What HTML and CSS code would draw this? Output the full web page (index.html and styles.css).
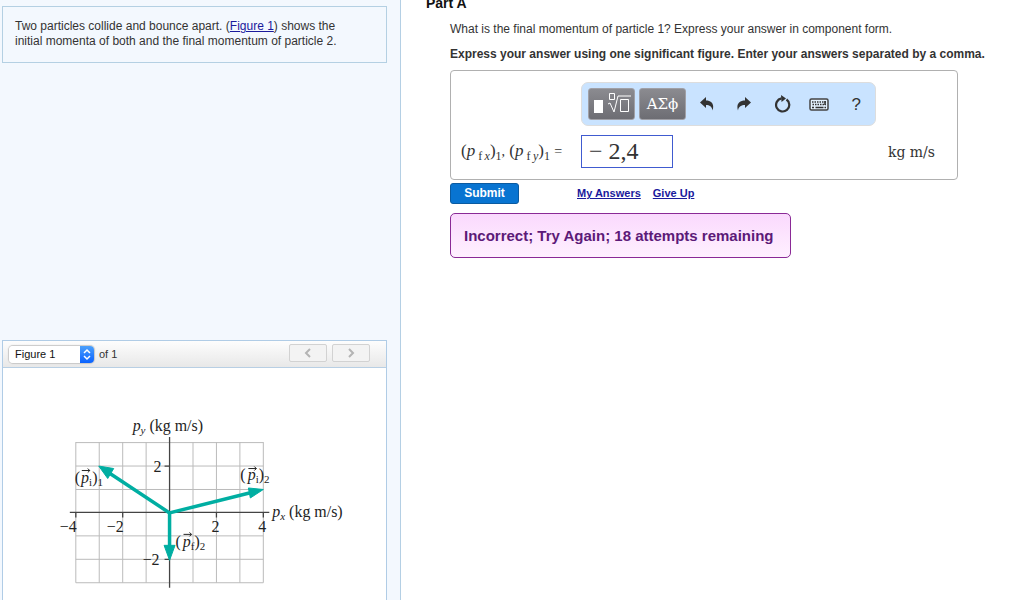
FILE: index.html
```html
<!DOCTYPE html>
<html lang="en">
<head>
<meta charset="utf-8">
<title>Momentum problem</title>
<link rel="stylesheet" href="styles.css">
</head>
<body>
<div class="page">
  <aside class="side">
    <p class="intro">Two particles collide and bounce apart. (<a href="#figure">Figure 1</a>) shows the initial momenta of both and the final momentum of particle 2.</p>
    <section class="figure" id="figure">
      <div class="figure-bar">
        <div class="picker">
          <select class="picker-select" id="fig"><option>Figure 1</option></select>
          <svg class="picker-arrows" width="14" height="17" viewBox="0 0 14 17"><path d="M4 7l3-3 3 3M4 10l3 3 3-3"/></svg>
        </div>
        <label class="figure-count" for="fig">of 1</label>
        <button class="nav" type="button" aria-label="Previous figure" disabled><svg width="8" height="10" viewBox="0 0 8 10"><path d="M6 1L2 5l4 4"/></svg></button>
        <button class="nav" type="button" aria-label="Next figure" disabled><svg width="8" height="10" viewBox="0 0 8 10"><path d="M2 1l4 4-4 4"/></svg></button>
      </div>
      <svg class="graph" width="384" height="232" viewBox="3 368 384 232">
        <path class="grid" d="M76 442.500H264M76 466H264M76 489.500H264M76 536H264M76 559.500H264M76 583H264M76 442V583M99.500 442V583M123 442V583M146.500 442V583M193.500 442V583M217 442V583M240.500 442V583M264 442V583"/>
        <path class="axis" d="M70 512.500H270M170 437V588M76 512.500v5M123 512.500v5M217 512.500v5M264 512.500v5M165 466h5M165 559.500h5"/>
        <g class="vector">
          <path d="M170 513L108 472M170 513L252 492.500M170 513V548"/>
          <path class="head" d="M99 466l15 2.500-6 10zM264 489.500l-15-1.500 2 10zM170 560.500l-5.500-15h11z"/>
        </g>
        <text x="133" y="431"><tspan class="it">p</tspan><tspan class="it sub" dy="3">y</tspan><tspan dy="-3"> (kg m/s)</tspan></text>
        <text x="273" y="517"><tspan class="it">p</tspan><tspan class="it sub" dy="3">x</tspan><tspan dy="-3"> (kg m/s)</tspan></text>
        <text x="154" y="472">2</text>
        <text x="143" y="565">−2</text>
        <text x="60" y="532">−4</text>
        <text x="107" y="532">−2</text>
        <text x="212" y="532">2</text>
        <text x="259" y="532">4</text>
        <text x="75" y="483">(<tspan class="it" dx="1">p</tspan><tspan class="sub" dy="3">i</tspan><tspan dy="-3">)</tspan><tspan class="sub" dy="3">1</tspan></text>
        <text x="241" y="480">(<tspan class="it" dx="2">p</tspan><tspan class="sub" dy="3">i</tspan><tspan dy="-3">)</tspan><tspan class="sub" dy="3">2</tspan></text>
        <text x="176" y="547">(<tspan class="it" dx="2">p</tspan><tspan class="sub" dy="3">f</tspan><tspan dy="-3">)</tspan><tspan class="sub" dy="3">2</tspan></text>
        <path class="over" d="M82 470.500h8m-2-2l2 2-2 2M249 468.500h8m-2-2l2 2-2 2M184 534.500h8m-2-2l2 2-2 2"/>
      </svg>
    </section>
  </aside>
  <main class="main">
    <h2 class="part">Part A</h2>
    <div class="content">
      <p class="question">What is the final momentum of particle 1? Express your answer in component form.</p>
      <p class="instruction">Express your answer using one significant figure. Enter your answers separated by a comma.</p>
      <form class="form">
        <div class="answer">
          <div class="toolbar">
            <button class="tool" type="button" aria-label="Templates"><svg width="38" height="24" viewBox="0 0 38 24"><path fill="#fff" d="M1 8h9v13H1z"/><path class="tool-line" d="M16.500 1.500h5v6h-5zM15 12l2-1 4 9 4-16h13M27.500 7.500h8v12h-8z"/></svg></button>
            <button class="tool tool-greek" type="button">ΑΣϕ</button>
            <button class="icon" type="button" aria-label="Undo"><svg width="14" height="14" viewBox="0 0 14 14"><path fill="#333" d="M0 5.500L6 0v3.500c6 0 8.500 4 6.500 10C12 9.500 9.500 8 6 8v3z"/></svg></button>
            <button class="icon" type="button" aria-label="Redo"><svg width="14" height="14" viewBox="0 0 14 14"><path fill="#333" d="M14 5.500L8 0v3.500c-6 0-9 4-7 10C1.500 9.500 4.500 8 8 8v3z"/></svg></button>
            <button class="icon" type="button" aria-label="Reset"><svg width="18" height="18" viewBox="0 0 18 18"><path fill="none" stroke="#333" stroke-width="2.200" d="M13.500 4.500A6.600 6.600 0 1 1 8.500 3.400"/><path fill="#333" d="M8 0l5 3.500-4.500 3.500z"/></svg></button>
            <button class="icon" type="button" aria-label="Keyboard"><svg width="20" height="14" viewBox="0 0 20 14"><rect x="1" y="2" width="18" height="11" rx="1.500" fill="#e4f1fd" stroke="#444" stroke-width="1.500"/><path fill="none" stroke="#333" stroke-width="1.500" stroke-dasharray="1.500 1" d="M3 5h14M3.500 7.500h13.500"/><path stroke="#333" stroke-width="1.500" d="M3 10.500h2m1.500 0h8m1 0h1.500M16 4v4"/></svg></button>
            <button class="icon help" type="button" aria-label="Help">?</button>
          </div>
          <label class="math" for="answer">(<i>p</i><sub>&nbsp;f&thinsp;<i>x</i></sub>)<sub>1</sub><span class="comma">,</span> (<i>p</i><sub>&nbsp;f&thinsp;<i>y</i></sub>)<sub>1</sub> <span class="equals">=</span></label>
          <input class="value" id="answer" type="text" value="− 2,4">
          <span class="unit">kg m/s</span>
        </div>
        <div class="actions">
          <button class="submit" type="button">Submit</button>
          <a href="#answers">My Answers</a>
          <a href="#giveup">Give Up</a>
        </div>
      </form>
      <p class="feedback">Incorrect; Try Again; 18 attempts remaining</p>
    </div>
  </main>
</div>
</body>
</html>
```
FILE: styles.css
```css
* { box-sizing: border-box; }
body {
  margin: 0;
  background: #fff;
  color: #333;
  font: 12px/15px "Liberation Sans", Arial, sans-serif;
}
p, h2 { margin: 0; }
a { color: #1a1a9c; }
button, input, select { font: inherit; color: inherit; margin: 0; padding: 0; }

.page { display: flex; min-height: 100vh; overflow: hidden; }

.side {
  display: flex;
  flex-direction: column;
  justify-content: space-between;
  flex: 0 0 401px;
  padding: 6px 13px 0 2px;
  background: #f3f8fe;
  border-right: 1px solid #b4cfe4;
}
.intro { padding: 12px 36px 13px 12px; border: 1px solid #b4d0e3; }
.figure { background: #fff; border: 1px solid #b0cce6; border-bottom: 0; }
.figure-bar {
  display: flex;
  align-items: center;
  gap: 5px;
  height: 27px;
  padding: 0 16px 0 6px;
  border-bottom: 1px solid #b8cfe4;
  background: linear-gradient(#fdfdfd, #e8e8e8);
  font-size: 11px;
}
.picker { display: flex; border-radius: 4px; overflow: hidden; box-shadow: 0 0 1px 1px #c8c8c8; }
.picker-select {
  appearance: none;
  width: 71px;
  height: 17px;
  padding-left: 6px;
  border: 0;
  border-radius: 0;
  background: #fff;
  color: #111;
}
.picker-arrows {
  background: linear-gradient(#4ba0fb, #0a62ff);
  fill: none;
  stroke: #fff;
  stroke-width: 1.5;
}
.figure-count { margin-right: auto; }
.nav {
  display: flex;
  align-items: center;
  justify-content: center;
  width: 38px;
  height: 18px;
  margin-bottom: 3px;
  border: 1px solid #d2d2d2;
  border-radius: 2px;
  background: #f3f3f3;
}
.nav path { fill: none; stroke: #b4b4b4; stroke-width: 2; }

.graph { display: block; max-width: 100%; font: 16px "Liberation Serif", "Times New Roman", serif; fill: #222; }
.grid { stroke: #bbb; fill: none; }
.axis { stroke: #444; stroke-width: 1.3; fill: none; }
.vector { fill: none; stroke: #00aea2; stroke-width: 3.5; }
.head { fill: #00aea2; stroke-width: 1; }
.over { fill: none; stroke: #222; }
.it { font-style: italic; }
.sub { font-size: 11px; }

.main { flex: 1; min-width: 0; padding-left: 25px; }
.part { font-size: 14px; line-height: 6px; color: #111; }
.content { padding: 15px 16px 0 24px; }
.question { line-height: 16px; }
.instruction { padding: 9px 0 8px; line-height: 16px; font-weight: bold; white-space: nowrap; }
.answer {
  display: grid;
  grid-template-columns: 119px 92px 1fr;
  column-gap: 6px;
  row-gap: 9px;
  align-items: center;
  max-width: 508px;
  padding: 11px 22px 11px 5px;
  border: 1px solid #b0b0b0;
  border-radius: 4px;
}
.toolbar {
  display: flex;
  align-items: center;
  grid-column: 2 / 4;
  gap: 4px;
  width: 295px;
  height: 44px;
  padding: 0 2px 0 6px;
  border: 1px solid #ddd;
  border-radius: 7px;
  background: #c9e3ff;
}
.tool {
  display: flex;
  align-items: center;
  justify-content: center;
  width: 47px;
  height: 32px;
  border: 1px solid #a0a0a6;
  border-radius: 3px;
  background: linear-gradient(#8b8b90, #6d6d73);
  color: #fff;
}
.tool-line { fill: none; stroke: #fff; }
.tool-greek { font: 15px "DejaVu Serif", "Liberation Serif", serif; }
.icon {
  display: flex;
  align-items: center;
  justify-content: center;
  flex: 1;
  height: 32px;
  border: 0;
  background: none;
}
.help { font-size: 17px; }
.math { padding-left: 5px; font: 17px/32px "Liberation Serif", serif; white-space: nowrap; }
.math sub { font-size: 12px; line-height: 1px; }
.comma { font-size: 14px; }
.equals { font-size: 14px; }
.value {
  width: 100%;
  height: 33px;
  padding: 0 7px;
  border: 1px solid #405bd0;
  background: #fff;
  font: 24px "Liberation Serif", serif;
}
.unit { justify-self: end; font: 14px "DejaVu Serif", serif; }
.actions { display: flex; align-items: center; gap: 12px; padding: 3px 0 9px; font-size: 11px; font-weight: bold; }
.submit {
  width: 69px;
  height: 21px;
  margin-right: 46px;
  border: 1px solid #0a5aa0;
  border-radius: 3px;
  background: #0874d1;
  color: #fff;
  font-size: 12px;
  font-weight: bold;
}
.feedback {
  width: fit-content;
  padding: 12px 16px 12px 13px;
  border: 1px solid #8a2a96;
  border-radius: 5px;
  background: linear-gradient(#fad9fd, #fff0ff);
  color: #5c1a78;
  font-size: 15px;
  line-height: 19px;
  font-weight: bold;
}
```
